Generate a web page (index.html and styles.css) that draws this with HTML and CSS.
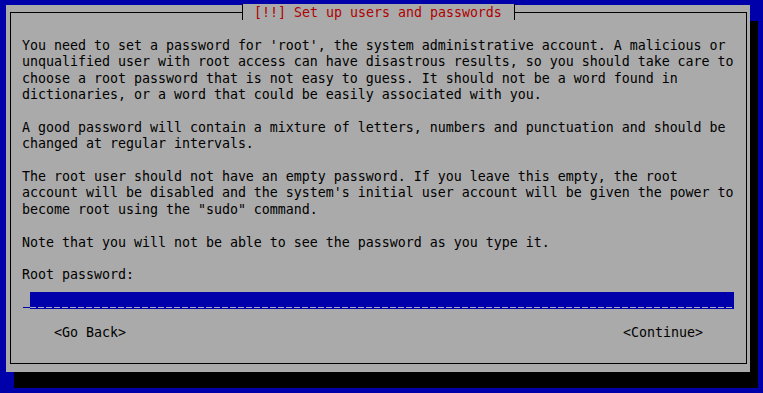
FILE: index.html
```html
<!DOCTYPE html>
<html lang="en">
<head>
<meta charset="utf-8">
<title>Set up users and passwords</title>
<link rel="stylesheet" href="styles.css">
</head>
<body>
<div class="screen">
  <div class="dialog">
    <div class="frame">
      <div class="title">[!!] Set up users and passwords</div>
      <div class="text">You need to set a password for 'root', the system administrative account. A malicious or
unqualified user with root access can have disastrous results, so you should take care to
choose a root password that is not easy to guess. It should not be a word found in
dictionaries, or a word that could be easily associated with you.

A good password will contain a mixture of letters, numbers and punctuation and should be
changed at regular intervals.

The root user should not have an empty password. If you leave this empty, the root
account will be disabled and the system's initial user account will be given the power to
become root using the "sudo" command.

Note that you will not be able to see the password as you type it.

Root password:</div>
      <div class="entry">
        <span class="cursor"></span>
        <span class="field"></span>
      </div>
      <div class="buttons">
        <span class="button">&lt;Go Back&gt;</span>
        <span class="button">&lt;Continue&gt;</span>
      </div>
    </div>
  </div>
</div>
</body>
</html>
```
FILE: styles.css
```css
html, body {
  margin: 0;
  padding: 0;
}
body {
  width: 763px;
  height: 393px;
  overflow: hidden;
  background: #0000aa;
  font-family: "DejaVu Sans Mono", "Liberation Mono", monospace;
  font-size: 13.3px;
  letter-spacing: -0.01px;
  color: #000;
}
.screen {
  padding: 5px 0 0 6px;
}
.dialog {
  width: 744px;
  height: 367px;
  background: #aaaaaa;
  box-shadow: 8px 16px 0 0 #000;
  padding: 7px 3px 8px 4px;
  box-sizing: border-box;
}
.frame {
  position: relative;
  height: 352px;
  border: 1px solid #000;
  box-sizing: border-box;
  padding: 25px 0 0 11px;
}
.title {
  position: absolute;
  top: -9px;
  left: 231px;
  height: 15px;
  line-height: 16px;
  padding: 1px 12px 0 11px;
  border-left: 1px solid #000;
  border-right: 1px solid #000;
  background: #aaaaaa;
  color: #b00000;
  white-space: pre;
}
.text {
  white-space: pre;
  line-height: 16.375px;
}
.entry {
  display: flex;
  margin: 8.4px 0 0 1px;
}
.cursor {
  width: 7px;
  height: 1px;
  margin-top: 15px;
  background: #0000aa;
}
.field {
  width: 704px;
  height: 17px;
  background:
    repeating-linear-gradient(to right, #a8a8c8 0 6px, transparent 6px 8px) 0 15px / 100% 1px no-repeat,
    #0000aa;
}
.buttons {
  display: flex;
  justify-content: space-between;
  margin-top: 16px;
  padding: 0 43px 0 32px;
  line-height: 16.375px;
}
```
